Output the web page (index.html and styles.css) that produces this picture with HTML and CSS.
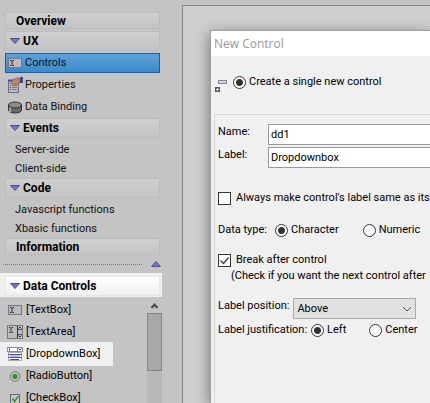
FILE: index.html
```
<!DOCTYPE html>
<html lang="en">
<head>
<meta charset="utf-8">
<title>New Control</title>
<link rel="stylesheet" href="styles.css">
</head>
<body>
<div class="app">
  <aside class="sidebar">
    <nav class="nav">
      <h2 class="head head-short">Overview</h2>
      <h2 class="head"><svg class="tri" viewBox="0 0 10 6"><path d="M0.5 0.5h9L5 5.5z"/></svg>UX</h2>
      <a href="#" class="item item-active">
        <svg class="icon" viewBox="0 0 16 16"><rect x="1.5" y="3.5" width="13" height="9" fill="#bdbdbd" stroke="#77758a"/><path d="M3 5.5h1.5M5.500 5.500H7M3 10.500h1.500M5.500 10.500H7M5 6v4" stroke="#222" fill="none"/></svg>Controls</a>
      <a href="#" class="item">
        <svg class="icon" viewBox="0 0 16 16"><rect x="1.500" y="3.500" width="10" height="12" fill="#b9bccb" stroke="#6a6d80"/><path d="M1 3.500h6" stroke="#3f50a0" stroke-width="2"/><path d="M3 8.500h1M3 10.500h1M3 12.500h1" stroke="#444"/><path d="M5 8.500h5M5 10.500h5M5 12.500h5" stroke="#777"/><path d="M3 6l3-3 3-2h4v5l-3 2-2 0-1-1-3 0z" fill="#bd8469" stroke="#8a5a48" stroke-width=".6"/><path d="M13 0h3v6h-3z" fill="#3d4a8c"/></svg>Properties</a>
      <a href="#" class="item">
        <svg class="icon" viewBox="0 0 16 16"><path d="M1.500 6v5c0 4 13 4 13 0V6z" fill="#666" stroke="#333"/><path d="M3 8.500v4.500" stroke="#aaa" stroke-width="2"/><ellipse cx="8" cy="6" rx="6.500" ry="3" fill="#8c8c8c" stroke="#333"/></svg>Data Binding</a>
      <h2 class="head"><svg class="tri" viewBox="0 0 10 6"><path d="M0.5 0.5h9L5 5.5z"/></svg>Events</h2>
      <a href="#" class="item item-sub">Server-side</a>
      <a href="#" class="item item-sub">Client-side</a>
      <h2 class="head"><svg class="tri" viewBox="0 0 10 6"><path d="M0.5 0.5h9L5 5.5z"/></svg>Code</h2>
      <a href="#" class="item item-sub">Javascript functions</a>
      <a href="#" class="item item-sub">Xbasic functions</a>
      <h2 class="head head-short">Information</h2>
    </nav>
    <div class="splitter"><span class="dots"></span><svg class="tri" viewBox="0 0 10 6"><path d="M0.5 5.5h9L5 0.500z"/></svg></div>
    <div class="palette-head"><h2 class="head head-light"><svg class="tri" viewBox="0 0 10 6"><path d="M0.5 0.5h9L5 5.5z"/></svg>Data Controls</h2></div>
    <div class="palette">
      <ul class="list">
        <li><svg class="icon" viewBox="0 0 16 16"><rect x="1.500" y="3.500" width="13" height="9" fill="#bdbdbd" stroke="#77758a"/><path d="M3 5.500h1.500M5.500 5.500H7M3 10.500h1.500M5.500 10.500H7M5 6v4" stroke="#222" fill="none"/></svg>[TextBox]</li>
        <li><svg class="icon" viewBox="0 0 16 16"><rect x=".5" y="1.500" width="15" height="13" fill="#bdbdbd" stroke="#77758a"/><path d="M2 3.500h1.500M4.500 3.500H6M2 8.500h1.500M4.500 8.500H6M4 4v4M10.500 2v12" stroke="#333" fill="none"/><path d="M11 5.500h4M11 10.500h4" stroke="#555577"/><path d="M11.500 4.500l1.500-1.500 1.500 1.500M11.500 11.500l1.500 1.500 1.500-1.500" stroke="#444" fill="none"/></svg>[TextArea]</li>
        <li class="picked"><svg class="icon" viewBox="0 0 16 16"><rect x=".5" y="1.500" width="15" height="4" fill="#fff" stroke="#8c8ca0"/><path d="M2.500 2v3M10.500 2v4" stroke="#77758a"/><path d="M11.500 2.500l1.500 1.500 1.500-1.500" stroke="#333" fill="none"/><rect x="1.500" y="6.500" width="13" height="8" fill="#fff" stroke="#aaaabc"/><path d="M1 8.500h14M1 11.500h14" stroke="#5454ae"/><path d="M3 10h10" stroke="#7777bd"/><path d="M3 13.500h9" stroke="#555"/></svg>[DropdownBox]</li>
        <li><svg class="icon" viewBox="0 0 16 16"><circle cx="8" cy="8.500" r="4.800" fill="#cacaca" stroke="#727286"/><circle cx="8" cy="8.500" r="2.700" fill="#3d9135"/></svg>[RadioButton]</li>
        <li><svg class="icon" viewBox="0 0 16 16"><rect x="3.500" y="4.500" width="9" height="9" fill="#c9c9c9" stroke="#66667a"/><path d="M5.500 8.500l2 3 4-5.500" stroke="#3d9135" stroke-width="1.600" fill="none"/></svg>[CheckBox]</li>
      </ul>
      <div class="scrollbar"><svg class="arrow" viewBox="0 0 15 16"><path d="M4.500 11l3-3.500 3 3.500" stroke="#484848" stroke-width="2" fill="none"/></svg><div class="thumb"></div></div>
    </div>
  </aside>
  <main class="canvas">
    <section class="dialog">
      <h1 class="title">New Control</h1>
      <div class="mode">
        <svg class="mode-icon" viewBox="0 0 14 14"><rect x="4.500" y="2.500" width="8" height="3" fill="#d3d3de" stroke="#87879b"/><rect x="1" y="9" width="5" height="5" fill="#555569"/><path d="M2 11.500h3M3.500 10v3" stroke="#fff"/></svg>
        <label class="opt"><input type="radio" name="mode" checked>Create a single new control</label>
      </div>
      <form class="group">
        <div class="field"><label for="name">Name:</label><input type="text" id="name" value="dd1"></div>
        <div class="field"><label for="label">Label:</label><input type="text" id="label" value="Dropdownbox"></div>
        <label class="check same"><input type="checkbox">Always make control's label same as its n</label>
        <div class="row type"><span class="caption">Data type:</span>
          <label class="opt"><input type="radio" name="type" checked>Character</label>
          <label class="opt"><input type="radio" name="type">Numeric</label></div>
        <label class="check"><input type="checkbox" checked>Break after control</label>
        <p class="hint">(Check if you want the next control after</p>
        <div class="row position"><label for="pos">Label position:</label>
          <span class="select"><select id="pos"><option>Above</option></select><svg viewBox="0 0 10 6"><path d="M1 1l4 4 4-4" stroke="#555" fill="none"/></svg></span></div>
        <div class="row just"><span class="caption">Label justification:</span>
          <label class="opt"><input type="radio" name="just" checked>Left</label>
          <label class="opt"><input type="radio" name="just">Center</label></div>
      </form>
    </section>
  </main>
</div>
</body>
</html>
```
FILE: styles.css
```
* { box-sizing: border-box; }
body {
  margin: 0;
  overflow: hidden;
  background: #c4c4c4;
  color: #000;
  font: 11px/16px Roboto, sans-serif;
}
.app {
  display: grid;
  grid-template-columns: 182px minmax(0, 1fr);
  height: 100vh;
}
svg { display: block; flex: none; }
.sidebar {
  display: flex;
  flex-direction: column;
  min-height: 0;
  padding-top: 12px;
}
.nav { padding: 0 22px 0 5px; }
.head {
  display: flex;
  align-items: center;
  gap: 3px;
  height: 20px;
  margin: 0;
  padding-left: 4px;
  border: 1px solid #bcbcbc;
  background: linear-gradient(#cfcfcf, #c4c4c4);
  font-size: 12px;
  font-weight: 700;
}
.head-short { height: 17px; padding-left: 10px; }
.head-short + .head { margin-top: 2px; }
.head-light { border-color: #e6e6e6; background: linear-gradient(#fff, #f0f0f0); }
.tri { width: 10px; height: 6px; fill: #7777c8; stroke: #4b4b91; }
.item {
  display: flex;
  align-items: center;
  gap: 2px;
  height: 22px;
  padding-left: 2px;
  color: #111;
  text-decoration: none;
}
.item-active {
  height: 20px;
  margin: 2px 0 1px;
  padding-left: 1px;
  border: 1px solid #0d62ad;
  background: linear-gradient(#5fa0d8, #3c8acb);
}
.item-sub { height: 19px; padding-left: 10px; }
.head + .item-sub { margin-top: 2px; }
.icon { width: 16px; height: 16px; }
.splitter {
  display: flex;
  align-items: center;
  justify-content: space-between;
  height: 18px;
  padding: 0 21px 0 3px;
}
.dots { width: 139px; border-top: 1px dotted #777; }
.palette-head { margin-right: 20px; padding: 3px 2px 1px 5px; background: #f0f0f0; }
.palette { display: flex; flex: 1; min-height: 0; margin-right: 20px; overflow: hidden; }
.list { flex: 1; margin: 0; padding: 2px 0 0; list-style: none; }
.list li {
  display: flex;
  align-items: center;
  gap: 3px;
  height: 22px;
  padding-left: 7px;
}
.list .picked { height: 24px; width: 113px; margin: -1px 0; background: #f0f0f0; }
.scrollbar { width: 15px; background: #b8b8b8; }
.arrow { width: 15px; height: 16px; background: #c4c4c4; }
.thumb { height: 58px; border: 1px solid #858585; background: #a8a8a8; }
.canvas {
  margin-top: 5px;
  padding: 24px 0 0 27px;
  border: solid #878787;
  border-width: 1px 0 0 1px;
  background: #cfcfcf;
  overflow: hidden;
}
.dialog {
  display: flex;
  flex-direction: column;
  height: 100%;
  border: solid #9d9d9d;
  border-width: 1px 0 0 1px;
  background: #f0f0f0;
  box-shadow: 0 4px 14px #0007;
  white-space: nowrap;
}
.title {
  margin: 0;
  padding: 0 3px;
  background: #fff;
  color: #999;
  font: 12px/25px "Open Sans", sans-serif;
}
.mode { display: flex; align-items: flex-start; gap: 5px; padding: 18px 0 0 3px; }
.mode-icon { width: 14px; height: 14px; margin-top: 4px; }
.opt { display: flex; align-items: center; gap: 3px; }
input, select { margin: 0; color: inherit; font: inherit; }
input[type="radio"], input[type="checkbox"] {
  appearance: none;
  flex: none;
  width: 13px;
  height: 13px;
  border: 1px solid #333;
  background: #fff;
}
input[type="radio"] { border-radius: 50%; }
input[type="radio"]:checked { background: radial-gradient(circle, #333 3px, #fff 4px); }
.group {
  flex: 1;
  margin: 22px 0 0 3px;
  padding: 9px 0 0 3px;
  border: solid #d9d9d9;
  border-width: 1px 0 0 1px;
}
.field { display: flex; align-items: flex-start; margin-bottom: 2px; }
.field label { width: 50px; }
.field input {
  flex: 1;
  min-width: 0;
  height: 21px;
  padding: 0 2px;
  border: 1px solid #999;
  border-right: 0;
  background: #fff;
}
.check { display: flex; align-items: center; gap: 5px; }
.same { margin-top: 22px; }
input[type="checkbox"]:checked {
  background: url("data:image/svg+xml,%3Csvg xmlns='http://www.w3.org/2000/svg' viewBox='0 0 11 11'%3E%3Cpath d='M1.500 5.500l3 3 5-6' fill='none' stroke='%23333' stroke-width='1.200'/%3E%3C/svg%3E") #fff;
}
.row { display: flex; align-items: center; }
.type { margin: 16px 0 14px; gap: 8px; }
.type .opt + .opt { margin-left: 16px; }
.hint { margin: 0 0 0 13px; }
.position { align-items: flex-start; gap: 4px; margin-top: 14px; }
.select { display: grid; align-items: center; width: 123px; }
.select > * { grid-area: 1 / 1; }
.select select {
  appearance: none;
  height: 21px;
  padding: 0 3px;
  border: 1px solid #aaa;
  border-radius: 0;
  background: #e1e1e1;
}
.select svg { width: 10px; height: 6px; margin-right: 4px; justify-self: end; pointer-events: none; }
.just { margin-top: 3px; gap: 4px; }
.just .opt + .opt { margin-left: 19px; }
```
